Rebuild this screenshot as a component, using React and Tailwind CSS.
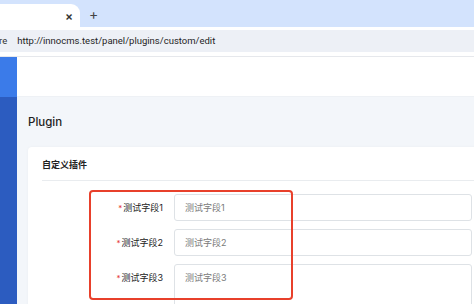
import React from 'react';

const fields = [
  { label: '测试字段1', placeholder: '测试字段1' },
  { label: '测试字段2', placeholder: '测试字段2' },
];

const cjk = "font-['Inter','Noto_Sans_CJK_SC',sans-serif]";

const App = () => {
  return (
    <div className={`w-[474px] h-[304px] overflow-hidden flex flex-col bg-white ${cjk}`}>
      {/* tab strip */}
      <div className="h-[27px] shrink-0 bg-[#d3e3fd] flex items-end">
        <div className="w-[80px] h-[23px] bg-white rounded-tr-[9px] flex items-center justify-end pr-[7px]">
          <span className="text-[12px] leading-none text-[#333] font-semibold">×</span>
        </div>
        <span className="ml-[9px] mb-[6px] text-[14px] leading-none text-[#444]">+</span>
      </div>

      {/* address bar */}
      <div className="h-[30px] shrink-0 bg-white border-b border-[#e6e8ec] flex items-start pt-[3px]">
        <div className="flex-1 h-[22px] bg-[#edf0f6] flex items-center text-[9.5px] text-[#1f1f1f] font-['Roboto',sans-serif]">
          <span className="-ml-[1px] text-[#333]">re</span>
          <span className="ml-[10px]">http://innocms.test/panel/plugins/custom/edit</span>
        </div>
      </div>

      {/* page */}
      <div className="flex-1 flex min-h-0">
        <div className="w-[17px] shrink-0 flex flex-col">
          <div className="h-[40px] bg-[#3b7be9]"></div>
          <div className="flex-1 bg-[#2c5cc0]"></div>
        </div>

        <div className="flex-1 flex flex-col min-w-0">
          <div className="h-[40px] shrink-0 bg-white border-b border-[#eef1f5]"></div>

          <div className="flex-1 bg-[#f3f6fa] pl-[11px] pt-[17px]">
            <div className="text-[11.5px] leading-[16px] text-[#222] font-medium">Plugin</div>

            <div className="mt-[17px] -mr-[20px] bg-white rounded-[4px] shadow-[0_0_3px_rgba(0,0,0,0.04)] h-[200px]">
              <div className="mx-[14px] h-[34px] flex items-center border-b border-[#e9ecef] pt-[2px]">
                <span className="text-[9px] text-[#222] font-semibold">自定义插件</span>
              </div>

              <div className="relative pt-[13px] flex flex-col gap-[8px]">
                {fields.map((f) => (
                  <div key={f.label} className="flex items-center">
                    <div className="w-[135px] shrink-0 flex justify-end items-center text-[9px] text-[#222]">
                      <span className="text-[#e53935] mr-[1px] text-[8px]">*</span>
                      {f.label}
                    </div>
                    <div className="ml-[11px] mr-[22px] flex-1 h-[27px] border border-[#dee2e6] rounded-[3px] flex items-center pl-[10px] text-[9px] text-[#7a7a7a]">
                      {f.placeholder}
                    </div>
                  </div>
                ))}
                <div className="flex items-start">
                  <div className="w-[135px] shrink-0 flex justify-end items-center text-[9px] text-[#222] pt-[7px]">
                    <span className="text-[#e53935] mr-[1px] text-[8px]">*</span>
                    测试字段3
                  </div>
                  <div className="ml-[11px] mr-[22px] flex-1 h-[50px] border border-[#dee2e6] rounded-[3px] pl-[10px] pt-[6px] text-[9px] text-[#7a7a7a]">
                    测试字段3
                  </div>
                </div>

                {/* annotation box */}
                <div className="absolute left-[61px] top-[9px] w-[204px] h-[110px] border-2 border-[#e8402b] rounded-[4px]"></div>
              </div>
            </div>
          </div>
        </div>
      </div>
    </div>
  );
};

export default App;
